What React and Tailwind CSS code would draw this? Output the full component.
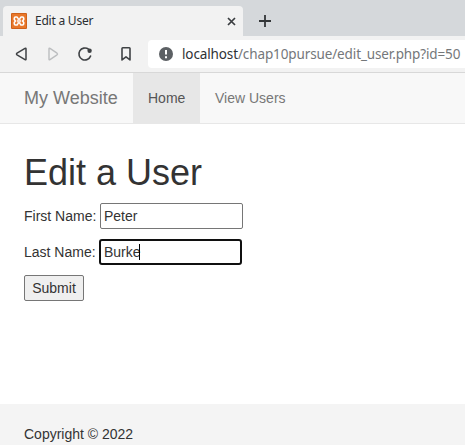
import React from 'react';

function TabStrip() {
  return (
    <div className="flex h-9 items-end bg-[#d5d8db] pl-[3px]">
      <div className="flex h-[30px] w-[240px] items-center rounded-t-[4px] bg-[#f2f2f2] pl-2 pr-[7px]">
        <svg width="16" height="16" viewBox="0 0 16 16" className="shrink-0">
          <rect width="16" height="16" rx="1" fill="#cf611a" />
          <rect x="1" y="1" width="14" height="14" fill="#e8772a" />
          <path
            d="M6.6 5.6V4.8Q6.6 4 5.6 4H4.5Q3.3 4 3.3 5.2V6.6L4.4 8L3.3 9.4V10.8Q3.3 12 4.5 12H5.6Q6.6 12 6.6 11.2V10.4M9.4 5.6V4.8Q9.4 4 10.4 4H11.5Q12.7 4 12.7 5.2V6.6L11.6 8L12.7 9.4V10.8Q12.7 12 11.5 12H10.4Q9.4 12 9.4 11.2V10.4M5.8 8H10.2M6.6 5.6Q8 6.8 9.4 5.6M6.6 10.4Q8 9.2 9.4 10.4"
            fill="none"
            stroke="#fff"
            strokeWidth="1.6"
            strokeLinejoin="round"
          />
        </svg>
        <span className="ml-2 grow whitespace-nowrap font-['Noto_Sans',sans-serif] text-[12px] leading-4 tracking-[-0.23px] text-[#2b2e31]">
          Edit a User
        </span>
        <svg width="9" height="9" viewBox="0 0 9 9" className="shrink-0">
          <path d="M1 1l7 7M8 1l-7 7" stroke="#3a3d40" strokeWidth="1.7" />
        </svg>
      </div>
      <div className="flex h-[30px] items-center pl-4">
        <svg width="12" height="12" viewBox="0 0 12 12">
          <path d="M6 0v12M0 6h12" stroke="#333638" strokeWidth="1.8" />
        </svg>
      </div>
    </div>
  );
}

function Toolbar() {
  return (
    <div className="flex h-[37px] items-center border-b border-[#d8d8d8] bg-[#f2f2f2] pl-[15px]">
      <svg width="13" height="16" viewBox="0 0 13 16" className="shrink-0">
        <path d="M11 2.8v10.4Q11 14.2 10 13.6L2 8.8Q1 8 2 7.2L10 2.4Q11 1.8 11 2.8Z" fill="none" stroke="#3f4245" strokeWidth="1.5" strokeLinejoin="round" />
      </svg>
      <svg width="13" height="16" viewBox="0 0 13 16" className="ml-[19px] shrink-0">
        <path d="M2 2.8v10.4Q2 14.2 3 13.6L10 8.8Q11 8 10 7.2L3 2.4Q2 1.8 2 2.8Z" fill="none" stroke="#bcbec0" strokeWidth="1.4" strokeLinejoin="round" />
      </svg>
      <svg width="16" height="16" viewBox="0 0 16 16" className="ml-[17px] shrink-0">
        <path d="M13.6 10A6 6 0 1 1 11.5 3.2" fill="none" stroke="#3f4245" strokeWidth="1.6" strokeLinecap="round" />
        <circle cx="12.6" cy="4.7" r="2.2" fill="#3f4245" />
      </svg>
      <svg width="12" height="16" viewBox="0 0 12 16" className="ml-[27px] shrink-0">
        <path d="M2 2.4Q2 1.7 2.7 1.7H9.3Q10 1.7 10 2.4V13.9L6 10.8L2 13.9Z" fill="none" stroke="#3f4245" strokeWidth="1.6" strokeLinejoin="round" />
      </svg>
      <div className="ml-4 flex h-7 grow items-center rounded-l-[4px] bg-white pl-[11px]">
        <svg width="14" height="14" viewBox="0 0 14 14" className="shrink-0">
          <circle cx="7" cy="7" r="7" fill="#5c6064" />
          <path d="M7 3v4.6M7 9.2v2" stroke="#fff" strokeWidth="2" />
        </svg>
        <span className="ml-[9px] whitespace-nowrap font-['Noto_Sans',sans-serif] text-[13.5px] leading-5 tracking-[-0.12px] text-[#74777a]">
          <span className="text-[#2f3235]">localhost</span>/chap10pursue/edit_user.php?id=50
        </span>
      </div>
    </div>
  );
}

function Navbar() {
  return (
    <nav className="flex h-[51px] border-b border-[#e7e7e7] bg-[#f8f8f8] pl-6 text-[#777]">
      <a className="w-[109px] pt-[15px] text-[18px] leading-5">My Website</a>
      <a className="-mb-px w-[67px] bg-[#e7e7e7] px-[15px] pt-[15px] leading-5 text-[#555]">Home</a>
      <a className="px-[15px] pt-[15px] leading-5">View Users</a>
    </nav>
  );
}

export default function App() {
  return (
    <div className="flex h-[445px] w-[465px] flex-col overflow-hidden bg-white font-['Liberation_Sans',Arial,sans-serif] text-[14px] leading-5 text-[#333]">
      <TabStrip />
      <Toolbar />
      <Navbar />
      <main className="h-[280px] pl-6 pt-[29px]">
        <h1 className="text-[36px] leading-10">Edit a User</h1>
        <form className="mt-2.5">
          <div className="flex h-[26px] items-center">
            <label className="w-[76px] whitespace-nowrap">First Name:</label>
            <div className="flex h-[26px] w-[143px] items-center rounded-[2px] border border-[#767676] pl-[3px]">Peter</div>
          </div>
          <div className="mt-2.5 flex h-[26px] items-center">
            <label className="w-[75px] whitespace-nowrap">Last Name:</label>
            <div className="flex h-[26px] w-[143px] items-center rounded-[3px] border-2 border-[#101010] pl-[3px]">
              Burke
              <span className="-ml-[2px] h-4 w-px bg-black" />
            </div>
          </div>
          <button type="button" className="mt-2.5 flex h-[26px] w-[60px] items-center justify-center rounded-[2px] border border-[#767676] bg-[#efefef]">
            Submit
          </button>
        </form>
      </main>
      <footer className="grow bg-[#f4f4f4] pl-6 pt-5">Copyright © 2022</footer>
    </div>
  );
}
